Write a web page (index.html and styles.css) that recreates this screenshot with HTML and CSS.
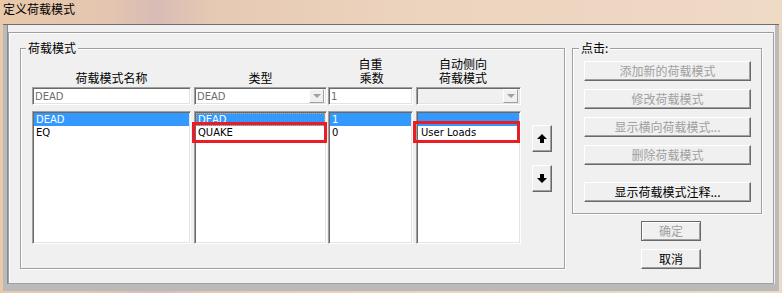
FILE: index.html
```html
<!DOCTYPE html>
<html lang="zh">
<head>
<meta charset="utf-8">
<title>定义荷载模式</title>
<link rel="stylesheet" href="styles.css">
</head>
<body>
<div class="titlebar">定义荷载模式</div>
<div class="window">
  <div class="client">
    <div class="panel">
      <div class="group group-left">
        <span class="legend">荷载模式</span>
        <div class="col c1">
          <div class="hdr">荷载模式名称</div>
          <div class="field"><span>DEAD</span></div>
          <div class="list">
            <div class="row sel">DEAD</div>
            <div class="row">EQ</div>
          </div>
        </div>
        <div class="col c2">
          <div class="hdr">类型</div>
          <div class="field"><span>DEAD</span><span class="dd"></span></div>
          <div class="list">
            <div class="row sel focus">DEAD</div>
            <div class="row">QUAKE</div>
            <div class="mark mark-type"></div>
          </div>
        </div>
        <div class="col c3">
          <div class="hdr">自重<br>&nbsp;乘数</div>
          <div class="field"><span>1</span></div>
          <div class="list">
            <div class="row sel">1</div>
            <div class="row">0</div>
          </div>
        </div>
        <div class="col c4">
          <div class="hdr hdr-auto">自动侧向<br>荷载模式</div>
          <div class="field field-off"><span class="dd"></span></div>
          <div class="list">
            <div class="row sel"></div>
            <div class="row row-wide">User Loads</div>
            <div class="mark mark-auto"></div>
          </div>
        </div>
        <div class="arrows">
          <button class="abtn" type="button" aria-label="上移">
            <svg width="10" height="9" viewBox="0 0 10 9"><path d="M5 0 L10 5 L7 5 L7 9 L3 9 L3 5 L0 5 Z" fill="#000"/></svg>
          </button>
          <button class="abtn" type="button" aria-label="下移">
            <svg width="10" height="9" viewBox="0 0 10 9"><path d="M5 9 L10 4 L7 4 L7 0 L3 0 L3 4 L0 4 Z" fill="#000"/></svg>
          </button>
        </div>
      </div>
      <div class="right">
        <div class="group group-right">
          <span class="legend legend-right">点击:</span>
          <button class="btn wide dis" type="button">添加新的荷载模式</button>
          <button class="btn wide dis" type="button">修改荷载模式</button>
          <button class="btn wide dis" type="button">显示横向荷载模式...</button>
          <button class="btn wide dis" type="button">删除荷载模式</button>
          <button class="btn wide sep" type="button">显示荷载模式注释...</button>
        </div>
        <button class="btn small ok dis" type="button">确定</button>
        <button class="btn small cancel" type="button">取消</button>
      </div>
    </div>
  </div>
</div>
</body>
</html>
```

FILE: styles.css
```css
* { box-sizing: border-box; }

html, body { margin: 0; padding: 0; }

body {
  width: 782px;
  height: 293px;
  overflow: hidden;
  background: linear-gradient(90deg, #e9c9aa 0%, #e4c5b0 14%, #d8bcb6 20%, #e6c9b2 27%, #ecd3bd 50%, #efdac6 100%);
  font-family: "Noto Sans CJK SC", sans-serif;
  font-size: 12px;
  color: #000;
}

.titlebar {
  height: 24px;
  padding: 2px 0 0 3px;
  line-height: 14px;
}

.window {
  margin-left: 3px;
  width: 776px;
  height: 267px;
  background: #bababa;
  border-top: 1px solid #6f6f6f;
  padding: 0 4px 7px 4px;
}

.client {
  height: 259px;
  background: #f0f0f0;
  border-left: 1px solid #8a8a8a;
  padding-top: 7px;
}

.panel {
  width: 766px;
  height: 252px;
  border: 1px solid #a0a0a0;
  box-shadow: inset 1px 1px 0 #fff;
  display: flex;
  align-items: flex-start;
  padding: 15px 0 0 11px;
}

.group {
  position: relative;
  border: 1px solid #a0a0a0;
  box-shadow: inset 1px 1px 0 #fff, 1px 1px 0 #fff;
}

.group-left {
  width: 545px;
  height: 221px;
  display: flex;
  align-items: flex-start;
  padding: 8px 0 0 11px;
}

.legend {
  position: absolute;
  top: -8px;
  left: 5px;
  padding: 0 2px;
  background: #f0f0f0;
  line-height: 14px;
}

.legend-right { left: 6px; }

.col { display: flex; flex-direction: column; }
.c1 { width: 159px; }
.c2 { width: 133px; margin-left: 3px; }
.c3 { width: 85px; margin-left: 1px; }
.c4 { width: 105px; margin-left: 3px; }

.hdr {
  height: 28px;
  display: flex;
  align-items: flex-end;
  justify-content: center;
  text-align: center;
  line-height: 14px;
}

.hdr-auto { padding-right: 11px; }

.field {
  margin-top: 2px;
  height: 18px;
  display: flex;
  align-items: center;
  background: #fff;
  border: 1px solid;
  border-color: #a0a0a0 #fff #fff #a0a0a0;
  box-shadow: inset 1px 1px 0 #696969, inset -1px -1px 0 #e3e3e3;
  padding-left: 2px;
  font-family: "DejaVu Sans", sans-serif;
  font-size: 10px;
  color: #6d6d6d;
}

.field-off { background: #f0f0f0; }

.dd {
  margin-left: auto;
  margin-right: 2px;
  width: 15px;
  height: 14px;
  background: #f0f0f0;
  border: 1px solid;
  border-color: #fff #a0a0a0 #a0a0a0 #fff;
  display: flex;
  align-items: center;
  justify-content: center;
}

.dd::after {
  content: "";
  border-left: 4px solid transparent;
  border-right: 4px solid transparent;
  border-top: 4px solid #a0a0a0;
}

.list {
  position: relative;
  margin-top: 6px;
  height: 133px;
  background: #fff;
  border: 1px solid;
  border-color: #a0a0a0 #fff #fff #a0a0a0;
  box-shadow: inset 1px 1px 0 #696969, inset -1px -1px 0 #e3e3e3;
  padding: 1px;
  font-family: "DejaVu Sans", sans-serif;
  font-size: 10px;
}

.row {
  height: 13px;
  line-height: 13px;
  padding-left: 2px;
  white-space: nowrap;
}

.row.sel { background: #3399ff; color: #fff; }
.row.focus { outline: 1px dotted #e8a050; outline-offset: -1px; }
.row-wide { padding-left: 3px; }

.mark {
  position: absolute;
  border: 3px solid #ec1c24;
}

.mark-type { left: -3px; top: 10px; width: 135px; height: 21px; }
.mark-auto { left: -4px; top: 9px; width: 107px; height: 22px; }

.arrows {
  margin-left: 11px;
  margin-top: 68px;
  display: flex;
  flex-direction: column;
  gap: 13px;
}

.abtn, .btn {
  appearance: none;
  margin: 0;
  padding: 0;
  background: #f0f0f0;
  border: 1px solid;
  border-color: #fff #696969 #696969 #fff;
  box-shadow: inset -1px -1px 0 #a0a0a0;
  font-family: "Noto Sans CJK SC", sans-serif;
  font-size: 12px;
  color: #000;
}

.abtn {
  width: 20px;
  height: 27px;
  display: flex;
  align-items: center;
  justify-content: center;
}

.right {
  margin-left: 7px;
  width: 190px;
  display: flex;
  flex-direction: column;
}

.group-right {
  height: 166px;
  padding: 12px 0 0 11px;
  display: flex;
  flex-direction: column;
  gap: 8px;
}

.btn {
  height: 20px;
  line-height: 16px;
  text-align: center;
  white-space: nowrap;
}

.btn.wide { width: 167px; }
.btn.sep { margin-top: 9px; }
.btn.dis { color: #a0a0a0; }

.btn.small { width: 60px; margin-left: 69px; }
.ok {
  margin-top: 7px;
  border-color: #696969;
  box-shadow: inset 1px 1px 0 #fff, inset -1px -1px 0 #a0a0a0;
}
.cancel { margin-top: 8px; }
```
